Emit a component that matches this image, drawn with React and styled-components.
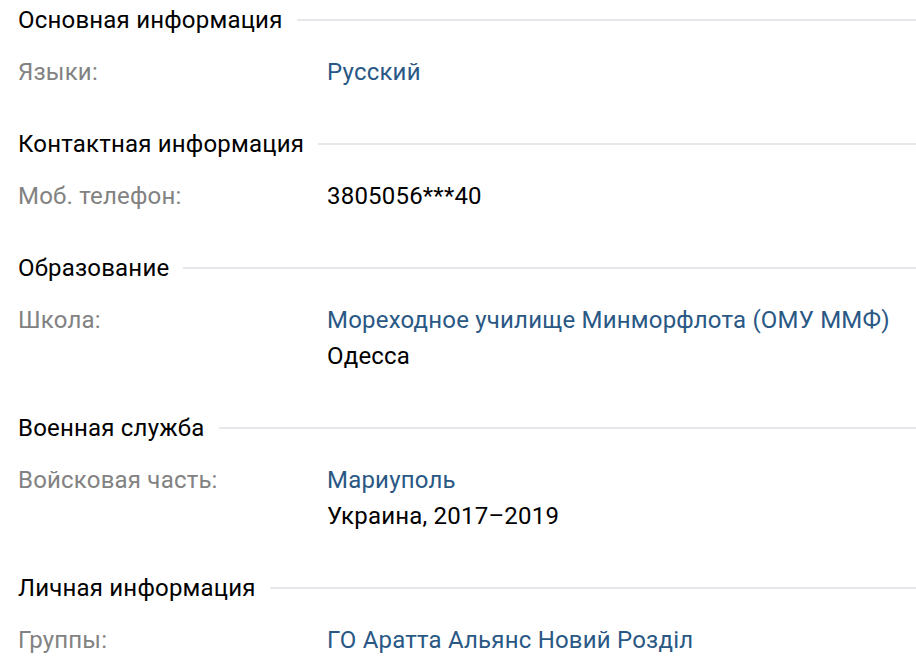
import styled, { createGlobalStyle } from "styled-components";

const GlobalStyle = createGlobalStyle`
  body {
    margin: 0;
    background: #ffffff;
    font-family: Roboto, "Noto Sans", sans-serif;
  }
`;

const Page = styled.div`
  padding: 2px 0 0 18px;
  font-size: 24px;
  letter-spacing: 0.2px;
  line-height: 36px;
  color: #000000;
`;

const Section = styled.section`
  margin-bottom: 36px;
`;

const Header = styled.div`
  display: flex;
  align-items: center;
`;

const HeaderTitle = styled.span`
  white-space: nowrap;
`;

const HeaderLine = styled.div`
  flex: 1;
  height: 2px;
  margin-left: 14px;
  background: #e7e8ec;
`;

const Rows = styled.div`
  margin-top: 16px;
`;

const Row = styled.div`
  display: grid;
  grid-template-columns: 309px 1fr;
`;

const Label = styled.div`
  color: #828282;
`;

const Value = styled.div`
  display: flex;
  flex-direction: column;
`;

const Text = styled.span`
  color: ${(props) => (props.$link ? "#2a5885" : "#000000")};
`;

const sections = [
  {
    title: "Основная информация",
    rows: [{ label: "Языки:", values: [{ text: "Русский", link: true }] }],
  },
  {
    title: "Контактная информация",
    rows: [{ label: "Моб. телефон:", values: [{ text: "3805056***40" }] }],
  },
  {
    title: "Образование",
    rows: [
      {
        label: "Школа:",
        values: [
          { text: "Мореходное училище Минморфлота (ОМУ ММФ)", link: true },
          { text: "Одесса" },
        ],
      },
    ],
  },
  {
    title: "Военная служба",
    rows: [
      {
        label: "Войсковая часть:",
        values: [
          { text: "Мариуполь", link: true },
          { text: "Украина, 2017–2019" },
        ],
      },
    ],
  },
  {
    title: "Личная информация",
    rows: [
      {
        label: "Группы:",
        values: [{ text: "ГО Аратта Альянс Новий Розділ", link: true }],
      },
    ],
  },
];

function App() {
  return (
    <>
      <GlobalStyle />
      <Page>
        {sections.map((section) => (
          <Section key={section.title}>
            <Header>
              <HeaderTitle>{section.title}</HeaderTitle>
              <HeaderLine />
            </Header>
            <Rows>
              {section.rows.map((row) => (
                <Row key={row.label}>
                  <Label>{row.label}</Label>
                  <Value>
                    {row.values.map((v) => (
                      <Text key={v.text} $link={v.link}>
                        {v.text}
                      </Text>
                    ))}
                  </Value>
                </Row>
              ))}
            </Rows>
          </Section>
        ))}
      </Page>
    </>
  );
}

export default App;
